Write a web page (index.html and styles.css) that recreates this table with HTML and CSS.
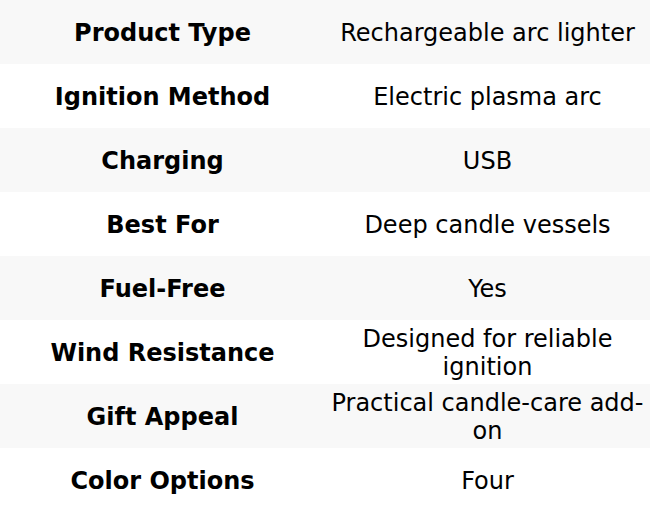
FILE: index.html
```html
<!DOCTYPE html>
<html>
<head>
<meta charset="utf-8">
<link rel="stylesheet" href="styles.css">
</head>
<body>
<table class="specs">
<tr><th>Product Type</th><td>Rechargeable arc lighter</td></tr>
<tr><th>Ignition Method</th><td>Electric plasma arc</td></tr>
<tr><th>Charging</th><td>USB</td></tr>
<tr><th>Best For</th><td>Deep candle vessels</td></tr>
<tr><th>Fuel-Free</th><td>Yes</td></tr>
<tr><th>Wind Resistance</th><td>Designed for reliable ignition</td></tr>
<tr><th>Gift Appeal</th><td>Practical candle-care add-on</td></tr>
<tr><th>Color Options</th><td>Four</td></tr>
</table>
</body>
</html>
```
FILE: styles.css
```css
html, body {
  margin: 0;
  padding: 0;
  background: #ffffff;
}
.specs {
  width: 650px;
  border-collapse: collapse;
  table-layout: fixed;
  font-family: "DejaVu Sans", sans-serif;
  font-size: 24px;
  line-height: 28px;
  color: #000;
}
.specs tr {
  height: 64px;
}
.specs tr:nth-child(odd) {
  background: #f8f8f8;
}
.specs th, .specs td {
  width: 50%;
  height: 64px;
  padding: 2px 6px 0;
  text-align: center;
  vertical-align: middle;
  box-sizing: border-box;
}
.specs th {
  font-weight: bold;
}
.specs td {
  font-weight: normal;
}
```
